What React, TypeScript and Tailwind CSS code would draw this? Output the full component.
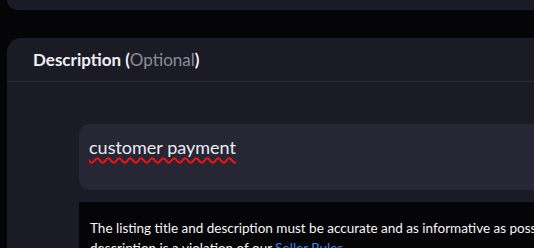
import React from 'react'

export default function App() {
  return (
    <div
      className="w-[534px] h-[248px] overflow-hidden bg-[#050507] pl-[7px]"
      style={{ fontFamily: 'Lato, "Noto Sans", sans-serif' }}
    >
      {/* previous card, only its bottom edge is visible */}
      <div className="w-[700px] h-[10px] rounded-b-[14px] bg-[#1b1b25]" />

      {/* Description card */}
      <div className="mt-[28px] w-[700px] rounded-t-[14px] bg-[#1b1b25]">
        <div className="h-[44px] flex items-center px-[26px] border-b border-[#2a2a38]">
          <h2 className="text-[17px] font-bold text-[#f1f1f5]">
            Description (<span className="font-normal text-[#8b8b99]">Optional</span>)
          </h2>
        </div>

        <div className="pl-[72px] pt-[42px]">
          <div className="h-[66px] rounded-[10px] bg-[#262634] px-[10px] pt-[11px] text-[18px] leading-[24px] text-[#ececf2]">
            <span className="underline decoration-wavy decoration-[#ff1010] decoration-[1.5px] underline-offset-[3px]">
              customer payment
            </span>
          </div>

          <div className="mt-[12px] bg-[#050508] px-[11px] pt-[16px] pb-4">
            <p className="text-[13.5px] leading-[20px] text-[#f5f5f7] whitespace-nowrap">
              The listing title and description must be accurate and as informative as possible. Misleading
              <br />
              description is a violation of our{' '}
              <a href="#" className="text-[#3b82f6]">Seller Rules</a>.
            </p>
          </div>
        </div>
      </div>
    </div>
  )
}
